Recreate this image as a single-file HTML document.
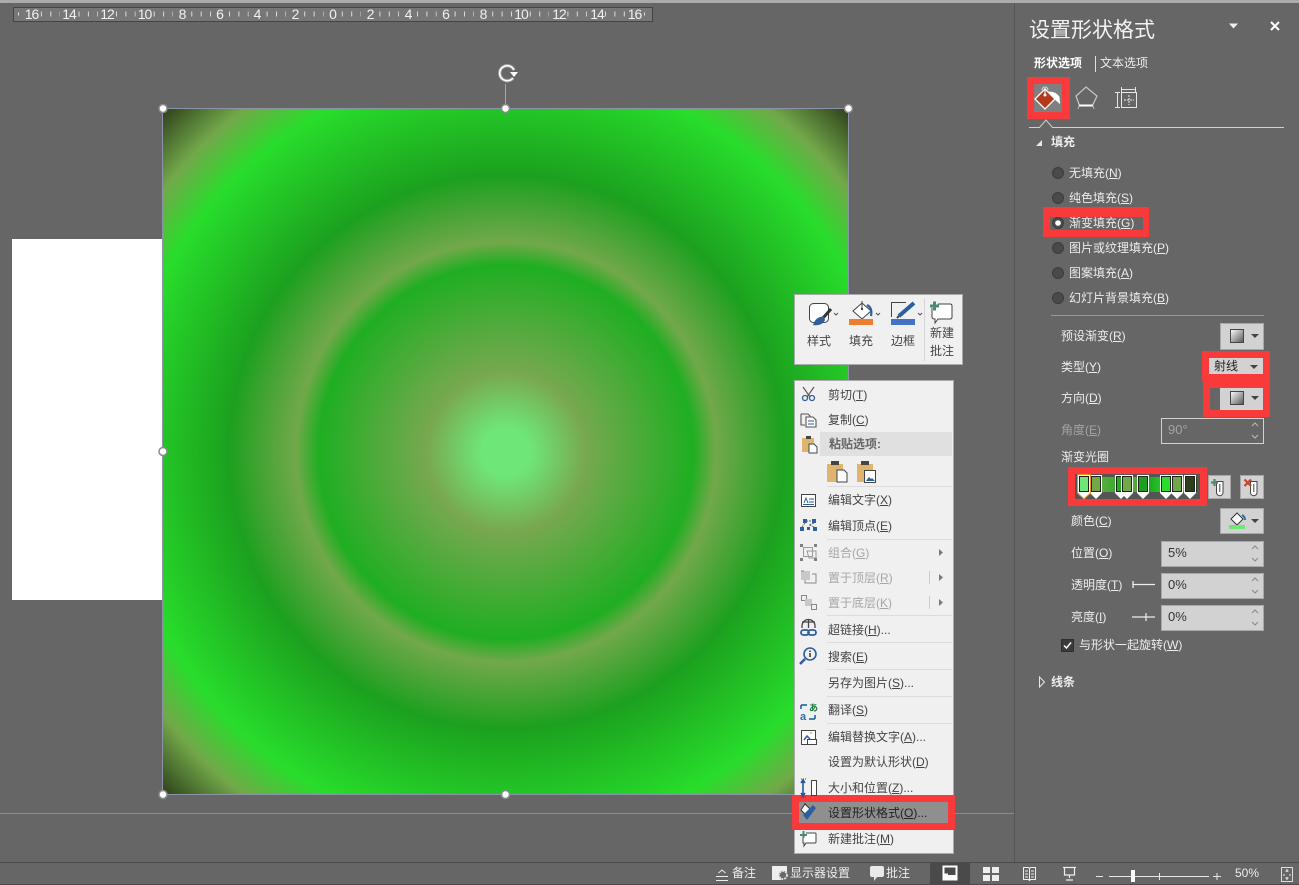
<!DOCTYPE html>
<html lang="zh"><head><meta charset="utf-8"><title>设置形状格式</title>
<style>
html,body{margin:0;padding:0;width:1299px;height:885px;overflow:hidden;background:#666}
body{position:relative;font-family:"Liberation Sans","Noto Sans CJK SC",sans-serif;font-size:12px}
.a{position:absolute;box-sizing:border-box}
.t{position:absolute;white-space:nowrap;line-height:18px;height:18px;color:#ededed}
.m{color:#444}.d{color:#a3a3a3}.g{color:#a6a6a6}
.b{font-weight:700}
.r{position:absolute;background:#f93a3a}
.btn{position:absolute;box-sizing:border-box;background:#d2d2d2;border:1px solid #a8a8a8}
.sep{position:absolute;left:827px;width:125px;height:1px;background:#dcdcdc}
u{text-underline-offset:1px}
svg{position:absolute;left:0;top:0}
</style></head><body>
<div class="a" style="left:0;top:0;width:1299px;height:3px;background:#ababab"></div>
<div class="a" style="left:0;top:813px;width:1014px;height:1px;background:#8c8c8c"></div>
<div class="a" style="left:1014px;top:3px;width:1px;height:859px;background:#555"></div>
<div class="a" style="left:0;top:862px;width:1299px;height:1px;background:#4a4a4a"></div>
<div class="a" style="left:0;top:884px;width:1299px;height:1px;background:#4a4a4a"></div>
<div class="a" style="left:930px;top:863px;width:40px;height:21px;background:#4a4a4a"></div>
<div class="a" style="left:12px;top:239px;width:151px;height:361px;background:#fff"></div>
<div class="a" style="left:162px;top:108px;width:687px;height:687px;border:1px solid #8c93a8;background:radial-gradient(circle 485px at 343px 343px,#6fe678 0,#6fe678 5%,#78a850 16.3%,#1fae22 38.6%,#72a84a 43.3%,#1ca01f 57.1%,#28dd2b 79.4%,#72a84a 89%,#2d3f1a 100%)"></div>

<!-- ruler -->
<svg width="1299" height="885" style="z-index:1">
<rect x="13.5" y="7.5" width="639" height="14" fill="#777" stroke="#444"/>
<g fill="#f0f0f0" font-family="Liberation Sans" font-size="14" text-anchor="middle" letter-spacing="-1">
<text x="31.5" y="19">16</text><text x="69" y="19">14</text><text x="107" y="19">12</text><text x="144.500" y="19">10</text><text x="182" y="19">8</text><text x="219.500" y="19">6</text><text x="257" y="19">4</text><text x="295" y="19">2</text><text x="332.500" y="19">0</text><text x="370" y="19">2</text><text x="408" y="19">4</text><text x="445.500" y="19">6</text><text x="483" y="19">8</text><text x="521" y="19">10</text><text x="559" y="19">12</text><text x="597" y="19">14</text><text x="634.500" y="19">16</text>
</g>
<path d="M40.900 14H60M78.500 14H98M116 14H135.500M153.700 14H173M191.300 14H211M229 14H248.500M266.600 14H286M304.200 14H323.500M341.800 14H361M379.400 14H399M417 14H436.500M454.600 14H474M492.200 14H512M529.800 14H549M567.400 14H587M605 14H625" stroke="#ddd" stroke-width="5" stroke-dasharray="1 8.400"/>
<path d="M18 14H22M644 14H648" stroke="#ddd" stroke-width="3" stroke-dasharray="1 3"/>
<!-- rotate -->
<path d="M505.500 84V104" stroke="#a8a8a8"/>
<path d="M514 70A7.500 7.500 0 1 0 513 78" fill="none" stroke="#9a9a9a" stroke-width="3.500"/>
<path d="M514 70A7.500 7.500 0 1 0 513 78" fill="none" stroke="#fff" stroke-width="1.600"/>
<path d="M510 72L518 72L514 77Z" fill="#fff"/>
<g fill="#fff" stroke="#8a8a8a" stroke-width="1.500">
<circle cx="163" cy="108.500" r="4"/><circle cx="505.500" cy="108.500" r="4"/><circle cx="848.500" cy="108.500" r="4"/><circle cx="163" cy="451.500" r="4"/><circle cx="163" cy="794.500" r="4"/><circle cx="505.500" cy="794.500" r="4"/>
</g>
</svg>

<!-- floating toolbar -->
<div class="a" style="z-index:2;left:794px;top:294px;width:169px;height:71px;background:#f0f0f0;border:1px solid #ababab"></div>
<div class="a" style="z-index:2;left:924px;top:298px;width:1px;height:63px;background:#d4d4d4"></div>
<!-- menu -->
<div class="a" style="z-index:2;left:794px;top:380px;width:160px;height:474px;background:#f0f0f0;border:1px solid #ababab"></div>
<div class="a" style="z-index:2;left:820px;top:432px;width:132px;height:24px;background:#e0e0e0"></div>
<div style="position:absolute;z-index:2;left:0;top:0">
<div class="sep" style="top:486px"></div><div class="sep" style="top:539px"></div><div class="sep" style="top:615px"></div><div class="sep" style="top:642px"></div><div class="sep" style="top:669px"></div><div class="sep" style="top:696px"></div><div class="sep" style="top:723px"></div>
</div>
<div class="r" style="z-index:2;left:792px;top:795px;width:163px;height:35px"></div>
<div class="a" style="z-index:2;left:799px;top:802px;width:149px;height:21px;background:#8f8f8f"></div>

<div style="position:absolute;z-index:3;left:0;top:0">
<span class="t m" style="left:807px;top:332px">样式</span>
<span class="t m" style="left:849px;top:332px">填充</span>
<span class="t m" style="left:891px;top:332px">边框</span>
<span class="t m" style="left:930px;top:324px">新建</span>
<span class="t m" style="left:930px;top:342px">批注</span>
<span class="t m" style="left:828px;top:386px">剪切(<u>T</u>)</span>
<span class="t m" style="left:828px;top:411px">复制(<u>C</u>)</span>
<span class="t b" style="left:829px;top:435px;color:#666">粘贴选项:</span>
<span class="t m" style="left:828px;top:491px">编辑文字(<u>X</u>)</span>
<span class="t m" style="left:828px;top:517px">编辑顶点(<u>E</u>)</span>
<span class="t g" style="left:828px;top:544px">组合(<u>G</u>)</span>
<span class="t g" style="left:828px;top:569px">置于顶层(<u>R</u>)</span>
<span class="t g" style="left:828px;top:594px">置于底层(<u>K</u>)</span>
<span class="t m" style="left:828px;top:621px">超链接(<u>H</u>)...</span>
<span class="t m" style="left:828px;top:648px">搜索(<u>E</u>)</span>
<span class="t m" style="left:828px;top:674px">另存为图片(<u>S</u>)...</span>
<span class="t m" style="left:828px;top:701px">翻译(<u>S</u>)</span>
<span class="t m" style="left:828px;top:728px">编辑替换文字(<u>A</u>)...</span>
<span class="t m" style="left:828px;top:753px">设置为默认形状(<u>D</u>)</span>
<span class="t m" style="left:828px;top:779px">大小和位置(<u>Z</u>)...</span>
<span class="t" style="left:828px;top:804px;color:#222">设置形状格式(<u>O</u>)...</span>
<span class="t m" style="left:828px;top:830px">新建批注(<u>M</u>)</span>
</div>

<!-- side panel -->
<div class="t" style="left:1029px;top:16px;font-size:21px;height:30px;line-height:30px;color:#f2f2f2">设置形状格式</div>
<span class="t b" style="left:1034px;top:54px;color:#fff">形状选项</span>
<div class="a" style="left:1095px;top:56px;width:1px;height:16px;background:#e0e0e0"></div>
<span class="t" style="left:1100px;top:54px">文本选项</span>
<div class="r" style="left:1027px;top:77px;width:43px;height:42px"></div>
<div class="a" style="left:1034px;top:84px;width:28px;height:28px;background:#7f7f7f"></div>
<span class="t b" style="left:1051px;top:133px">填充</span>
<div class="r" style="left:1043px;top:207px;width:106px;height:30px"></div>
<div class="a" style="left:1050px;top:217px;width:93px;height:13px;background:#666"></div>
<span class="t" style="left:1069px;top:164px">无填充(<u>N</u>)</span>
<span class="t" style="left:1069px;top:189px">纯色填充(<u>S</u>)</span>
<span class="t" style="left:1069px;top:214px">渐变填充(<u>G</u>)</span>
<span class="t" style="left:1069px;top:239px">图片或纹理填充(<u>P</u>)</span>
<span class="t" style="left:1069px;top:264px">图案填充(<u>A</u>)</span>
<span class="t" style="left:1069px;top:289px">幻灯片背景填充(<u>B</u>)</span>
<div class="a" style="left:1051px;top:315px;width:213px;height:1px;background:#989898"></div>

<span class="t" style="left:1061px;top:327px">预设渐变(<u>R</u>)</span>
<span class="t" style="left:1061px;top:358px">类型(<u>Y</u>)</span>
<span class="t" style="left:1061px;top:389px">方向(<u>D</u>)</span>
<span class="t d" style="left:1061px;top:421px">角度(<u>E</u>)</span>
<span class="t" style="left:1061px;top:448px">渐变光圈</span>
<span class="t" style="left:1071px;top:512px">颜色(<u>C</u>)</span>
<span class="t" style="left:1071px;top:544px">位置(<u>O</u>)</span>
<span class="t" style="left:1071px;top:576px">透明度(<u>T</u>)</span>
<span class="t" style="left:1071px;top:608px">亮度(<u>I</u>)</span>
<span class="t" style="left:1079px;top:636px">与形状一起旋转(<u>W</u>)</span>
<span class="t b" style="left:1051px;top:673px">线条</span>

<div class="btn" style="left:1220px;top:323px;width:44px;height:27px"></div>
<div class="r" style="left:1202px;top:351px;width:68px;height:30px"></div>
<div class="a" style="left:1209px;top:358px;width:54px;height:16px;background:#d2d2d2"></div>
<span class="t" style="left:1214px;top:357px;color:#222">射线</span>
<div class="r" style="left:1203px;top:381px;width:67px;height:36px"></div>
<div class="a" style="left:1210px;top:388px;width:10px;height:22px;background:#666"></div>
<div class="a" style="left:1220px;top:388px;width:43px;height:22px;background:#d2d2d2"></div>
<div class="a" style="left:1161px;top:418px;width:103px;height:26px;border:1px solid #d2d2d2"></div>
<span class="t d" style="left:1168px;top:421px;font-size:13px">90°</span>
<div class="r" style="left:1068px;top:467px;width:139px;height:39px"></div>
<div class="a" style="left:1075px;top:474px;width:125px;height:25px;background:#555"></div>
<div class="a" style="left:1077px;top:477px;width:120px;height:15px;background:linear-gradient(90deg,#6fe678 5%,#72a84a 15%,#1fae22 39%,#72a84a 44%,#1ca01f 58%,#28dd2b 77%,#72a84a 90%,#2d3f1a 100%)"></div>
<div class="btn" style="left:1208px;top:475px;width:23px;height:24px"></div>
<div class="btn" style="left:1240px;top:475px;width:24px;height:24px"></div>
<div class="btn" style="left:1220px;top:508px;width:44px;height:26px"></div>
<div class="btn" style="left:1161px;top:541px;width:103px;height:26px"></div>
<div class="btn" style="left:1161px;top:573px;width:103px;height:26px"></div>
<div class="btn" style="left:1161px;top:605px;width:103px;height:26px"></div>
<span class="t" style="left:1168px;top:544px;color:#333;font-size:13px">5%</span>
<span class="t" style="left:1168px;top:576px;color:#333;font-size:13px">0%</span>
<span class="t" style="left:1168px;top:608px;color:#333;font-size:13px">0%</span>

<!-- status -->
<span class="t" style="left:732px;top:864px">备注</span>
<span class="t" style="left:790px;top:864px">显示器设置</span>
<span class="t" style="left:886px;top:864px">批注</span>
<span class="t" style="left:1235px;top:864px">50%</span>

<!-- icons overlay -->
<svg width="1299" height="885" style="z-index:4" fill="none">
<defs>
<linearGradient id="gr" x1="0" y1="0" x2="1" y2="1"><stop offset="0" stop-color="#fff"/><stop offset="1" stop-color="#555"/></linearGradient>
</defs>
<!-- panel header -->
<path d="M1229 23.500h9l-4.500 5z" fill="#eee"/>
<path d="M1271 22l8 8M1279 22l-8 8" stroke="#fff" stroke-width="2"/>
<!-- tab icons -->
<path d="M1045 89L1055 99L1045 109L1035 99Z" fill="#b5391a" stroke="#fff" stroke-width="1.300"/>
<path d="M1045 95V88" stroke="#fff"/><path d="M1042 90a3 3 0 0 1 6 0" stroke="#ddd"/><circle cx="1045" cy="95" r="1.500" fill="#fff"/>
<path d="M1049 92C1054 92 1057 94 1059 97L1059.500 103L1056 100Z" fill="#fff" stroke="#fff"/>
<path d="M1086 87L1097 96L1092.500 105.500H1079.500L1076 96Z" stroke="#c8c8c8" stroke-width="1.200"/><path d="M1079 105.500h14" stroke="#fff" stroke-width="2"/><path d="M1079 106l-1 3M1093 106l1 3" stroke="#bbb"/>
<path d="M1121.500 92.500H1136.500V107.500H1121.500Z" stroke="#e8e8e8"/><path d="M1121 89.500H1136M1121.500 87V92M1135.500 87V92M1115 92.500H1120M1115 107.500H1120M1117.500 92.500V107.500" stroke="#e4e4e4"/><path d="M1129 95V105M1124 100H1134" stroke="#eee" stroke-dasharray="2 1"/>
<path d="M1029 127.500H1039.500L1046 120L1052.500 127.500H1284" stroke="#d0d0d0"/>
<path d="M1036 146h6v-6z" fill="#e8e8e8"/>
<path d="M1039.500 677l5 5-5 5z" stroke="#e8e8e8" fill="#666"/>
<!-- radios -->
<g fill="#4a4a4a" stroke="#3c3c3c"><circle cx="1058" cy="173" r="5.500"/><circle cx="1058" cy="198" r="5.500"/><circle cx="1058" cy="223" r="5.500"/><circle cx="1058" cy="248" r="5.500"/><circle cx="1058" cy="273" r="5.500"/><circle cx="1058" cy="298" r="5.500"/></g>
<circle cx="1058" cy="223" r="2.800" fill="#fff"/>
<!-- gradient swatches -->
<rect x="1230.500" y="329.500" width="13" height="13" fill="url(#gr)" stroke="#444"/>
<rect x="1230.500" y="391.500" width="13" height="13" fill="url(#gr)" stroke="#444"/>
<g fill="#444"><path d="M1251 334h8l-4 4zM1250 365h8l-4 4zM1251 396h8l-4 4zM1251 519h8l-4 4z"/></g>
<!-- spinners -->
<g stroke="#bdbdbd"><path d="M1252 426l3-3 3 3M1252 435l3 3 3-3"/></g>
<g stroke="#8a8a8a"><path d="M1252 549l3-3 3 3M1252 558l3 3 3-3M1252 581l3-3 3 3M1252 590l3 3 3-3M1252 613l3-3 3 3M1252 622l3 3 3-3"/></g>
<!-- stops -->
<g>
<path d="M1090 475h12v18l-6 6-6-6z" fill="#fff"/><rect x="1091.500" y="476.500" width="9" height="15" fill="#72a84a" stroke="#222"/>
<path d="M1115 475h12v18l-6 6-6-6z" fill="#fff"/><rect x="1116.500" y="476.500" width="9" height="15" fill="#1fae22" stroke="#222"/>
<path d="M1121 475h12v18l-6 6-6-6z" fill="#fff"/><rect x="1122.500" y="476.500" width="9" height="15" fill="#72a84a" stroke="#222"/>
<path d="M1137 475h12v18l-6 6-6-6z" fill="#fff"/><rect x="1138.500" y="476.500" width="9" height="15" fill="#1ca01f" stroke="#222"/>
<path d="M1160 475h12v18l-6 6-6-6z" fill="#fff"/><rect x="1161.500" y="476.500" width="9" height="15" fill="#28dd2b" stroke="#222"/>
<path d="M1171 475h12v18l-6 6-6-6z" fill="#fff"/><rect x="1172.500" y="476.500" width="9" height="15" fill="#72a84a" stroke="#222"/>
<path d="M1184 475h12v18l-6 6-6-6z" fill="#fff"/><rect x="1185.500" y="476.500" width="9" height="15" fill="#2d3f1a" stroke="#222"/>
<path d="M1077.500 474.500h13v18.500l-6.500 6-6.500-6z" fill="#fff" stroke="#f28a1e"/><rect x="1079.500" y="476.500" width="9" height="15" fill="#6fe678" stroke="#222"/>
</g>
<!-- stop add/remove -->
<path d="M1216.500 481.500h6.500v11a3.200 3.200 0 0 1-6.500 0z" fill="#fff" stroke="#444"/><path d="M1219.800 484v8" stroke="#444"/><path d="M1211 482.500h7M1214.500 479v7" stroke="#4a8a70" stroke-width="2.200"/>
<path d="M1250.500 481.500h6.500v11a3.200 3.200 0 0 1-6.500 0z" fill="#fff" stroke="#444"/><path d="M1253.800 484v8" stroke="#444"/><path d="M1244.500 479.500l6.500 6.500M1251 479.500l-6.500 6.500" stroke="#c0452a" stroke-width="2.200"/>
<!-- colour -->
<path d="M1237 513l6 6-6 6-6-6z" fill="#fff" stroke="#333"/><path d="M1242 515c2 1 3 3 3 5" stroke="#2e6ea8" stroke-width="2"/>
<rect x="1229" y="525" width="16" height="4" fill="#6fe678"/>
<!-- sliders -->
<path d="M1133 581v7M1133 584.500H1155" stroke="#eee" stroke-width="1.300"/><path d="M1132 617H1155M1146 613v8" stroke="#eee" stroke-width="1.200"/>
<!-- checkbox -->
<rect x="1061.500" y="639.500" width="12" height="12" fill="#3c3c3c" stroke="#2e2e2e"/>
<path d="M1064 645.500l2.500 2.500 4.500-5.500" stroke="#fff" stroke-width="1.500"/>

<!-- toolbar icons -->
<rect x="809.500" y="303.500" width="19" height="19" rx="4" fill="#fff" stroke="#444"/>
<path d="M831 309l-8 9" stroke="#333" stroke-width="3"/><path d="M824 317c-5-1-9 2-11 8 6 1 10-1 12-5z" fill="#2e5e9e"/>
<path d="M834 313l2 2 2-2M876 313l2 2 2-2M918 313l2 2 2-2" stroke="#555"/>
<path d="M862 303l9 8-9 8-9-8z" fill="#fff" stroke="#444"/><path d="M862 309V301" stroke="#444"/><circle cx="862" cy="309" r="1.200" fill="#444"/><path d="M867 305c4 2 5 6 4 11" stroke="#2e5e9e" stroke-width="2.200"/>
<rect x="849" y="319" width="24" height="6" fill="#ed7d31"/>
<rect x="891" y="319" width="24" height="6" fill="#4472c4"/>
<path d="M906 302.500H891.500V317" stroke="#444"/><path d="M914 303l-15 13" stroke="#2e5e9e" stroke-width="4"/><path d="M899 316l-2 2" stroke="#444" stroke-width="2"/>
<path d="M938 304h12q2 0 2 2v11q0 2-2 2h-12l-3 4v-4q-3 0-3-2v-9" fill="#fff" stroke="#444"/>
<path d="M930 306h9M934.500 301.500v9" stroke="#4a8a70" stroke-width="3"/>
<!-- menu icons -->
<g stroke="#555" stroke-width="1.100">
<path d="M803 387l7 10M814 387l-7 10"/><circle cx="805" cy="398" r="2.500" stroke="#2e5e9e" stroke-width="1.300"/><circle cx="812" cy="398" r="2.500" stroke="#2e5e9e" stroke-width="1.300"/>
<path d="M801 414h7l2 2v9M801 414v11h4" /><path d="M806 417h7l3 3v7h-10z" fill="#fff"/><path d="M808 421h6M808 424h6" stroke="#2e5e9e"/>
</g>
<rect x="802" y="438" width="12" height="14" fill="#dfb46f"/><rect x="806" y="436" width="5" height="3" fill="#444"/><path d="M809 444h5l3 3v6h-8z" fill="#fff" stroke="#444"/>
<rect x="827" y="464" width="16" height="18" fill="#dfb46f"/><rect x="831" y="461" width="8" height="4" fill="#444"/><path d="M837 470h7l3 3v9h-10z" fill="#fff" stroke="#444"/>
<rect x="857" y="464" width="16" height="18" fill="#dfb46f"/><rect x="861" y="461" width="8" height="4" fill="#444"/><rect x="864.500" y="470.500" width="11" height="12" fill="#fff" stroke="#444"/><path d="M866 481l3-4 2 2 1-1 3 3z" fill="#2e5e9e"/>
<rect x="801.500" y="494.500" width="14" height="12" fill="#fff" stroke="#444"/><path d="M804 503l2-5 2 5M809 499h5M809 502h5M803 504.500h11" stroke="#2e5e9e"/>
<g fill="#2e5e9e"><rect x="800" y="527" width="4" height="4"/><rect x="813" y="527" width="4" height="4"/><rect x="803" y="519" width="4" height="4"/><rect x="812" y="519" width="4" height="4"/><rect x="807" y="527" width="3" height="3"/></g><path d="M806 521h6M802 527l3-4M814 523l-5 2 5 2" stroke="#666" stroke-dasharray="2 1"/>
<g stroke="#9a9a9a"><rect x="803.500" y="547.500" width="9" height="9"/><path d="M807 551h9v7h-7z"/></g><g fill="#808080"><rect x="800" y="544" width="3" height="3"/><rect x="814" y="544" width="3" height="3"/><rect x="800" y="558" width="3" height="3"/><rect x="814" y="558" width="3" height="3"/></g>
<rect x="801" y="571" width="9" height="9" fill="#c8c8c8"/><path d="M805 580v3h11v-9h-4M801 571h3" stroke="#888"/>
<rect x="801.500" y="595.500" width="5" height="5" fill="#f0f0f0" stroke="#888"/><rect x="805" y="599" width="7" height="7" fill="#c8c8c8"/><rect x="811.500" y="604.500" width="5" height="5" fill="#f0f0f0" stroke="#888"/>
<g stroke="#444" stroke-width="1.300"><path d="M802 628v-2a6.500 6.500 0 0 1 13 0v2"/><path d="M802 622h13M808.500 620v8"/></g><g stroke="#2e5e9e" stroke-width="1.800"><rect x="801" y="630" width="8" height="5" rx="2.500"/><rect x="808" y="630" width="8" height="5" rx="2.500"/></g>
<circle cx="810" cy="654" r="6" stroke="#2e5e9e" stroke-width="1.600"/><path d="M805 659l-5 5" stroke="#2e5e9e" stroke-width="2.500"/><path d="M810 653v4M810 650.500v1.500" stroke="#333" stroke-width="1.500"/>
<g font-family="Liberation Sans,Noto Sans CJK SC,sans-serif" font-size="9" font-weight="700"><text x="809" y="711" fill="#1a7a3a" stroke="none">あ</text><text x="800" y="720" fill="#2e6ea8" stroke="none" font-size="11">a</text></g><path d="M801 705h6M801 705v4M809 719h6M815 715v4" stroke="#2e6ea8" stroke-width="1.700"/>
<path d="M801.500 730.500h14v11h-5v3h-9z" fill="#fff" stroke="#444"/><path d="M804 740l3-4 3 3" stroke="#2e5e9e" stroke-width="1.500"/><circle cx="811" cy="733" r="1" fill="#e5a94f"/><rect x="807.500" y="739.500" width="9" height="5" fill="#fff" stroke="#444"/>
<path d="M803 781v14M801 783l2-3 2 3M801 793l2 3 2-3" stroke="#1f5a9e" stroke-width="1.600"/><rect x="811.500" y="780.500" width="5" height="15" stroke="#444" fill="#fff"/><path d="M801 779h5M801 797h5" stroke="#444" stroke-dasharray="1 1"/>
<path d="M805 804l7 7-5 5-6-6z" fill="#fff" stroke="#333"/><path d="M803 815l4 5 9-12-3-3z" fill="#2e5e9e"/><path d="M805 804v-1" stroke="#333"/>
<path d="M806 833h9q1 0 1 1v8q0 1-1 1h-9l-2 3v-3h-1v-6" stroke="#444" fill="#fff"/><path d="M800 835h7M803.500 831v7" stroke="#4a8a70" stroke-width="2"/>
<g fill="#7a7a7a"><path d="M939 549v7l4-3.500zM939 574v7l4-3.500zM939 599v7l4-3.500z"/></g>
<path d="M929.500 571v13M929.500 596v13" stroke="#ccc"/>
<!-- status icons -->
<path d="M716 876.500h12M716 880.500h12M718.500 873l3.500-3 3.500 3" stroke="#eee"/>
<path d="M772 866h15v11h-6v3h-9z" fill="#eee"/><circle cx="783" cy="875" r="4" fill="#666" stroke="#ddd" stroke-width="2" stroke-dasharray="2 1"/>
<path d="M872 866h10q2 0 2 2v7q0 2-2 2h-5l-3 4v-4h-2q-2 0-2-2v-7q0-2 2-2z" fill="#e8e8e8"/>
<rect x="943.500" y="866.500" width="13" height="13" stroke="#fff" stroke-width="2"/><path d="M944 875h12v4h-12z" fill="#fff"/><path d="M944 873.500h4v2h-4z" fill="#fff"/>
<g fill="#eee"><rect x="983" y="867" width="7" height="6"/><rect x="992" y="867" width="7" height="6"/><rect x="983" y="875" width="7" height="6"/><rect x="992" y="875" width="7" height="6"/></g>
<path d="M1023.500 867.500h5l1 1 1-1h5v12h-5l-1 1-1-1h-5zM1029.500 868v12M1025 871h3M1025 874h3M1025 877h3M1031 871h3M1031 874h3M1031 877h3" stroke="#eee"/>
<path d="M1063 867.500h13M1064.500 868v7h10v-7M1069.500 875v3M1066 880h7" stroke="#eee" stroke-width="1.200"/>
<path d="M1096 876.500h7M1109 876.500H1209M1213 876.500h8M1217 873v7M1159.500 873v7" stroke="#e8e8e8"/>
<rect x="1131" y="870" width="4" height="12" fill="#fff"/>
<rect x="1281.500" y="867.500" width="11" height="14" stroke="#ddd"/><path d="M1287 869v3M1287 877v3M1283 875h2M1289 875h2M1285.500 871h3M1285.500 878h3" stroke="#eee"/>
</svg>
</body></html>
